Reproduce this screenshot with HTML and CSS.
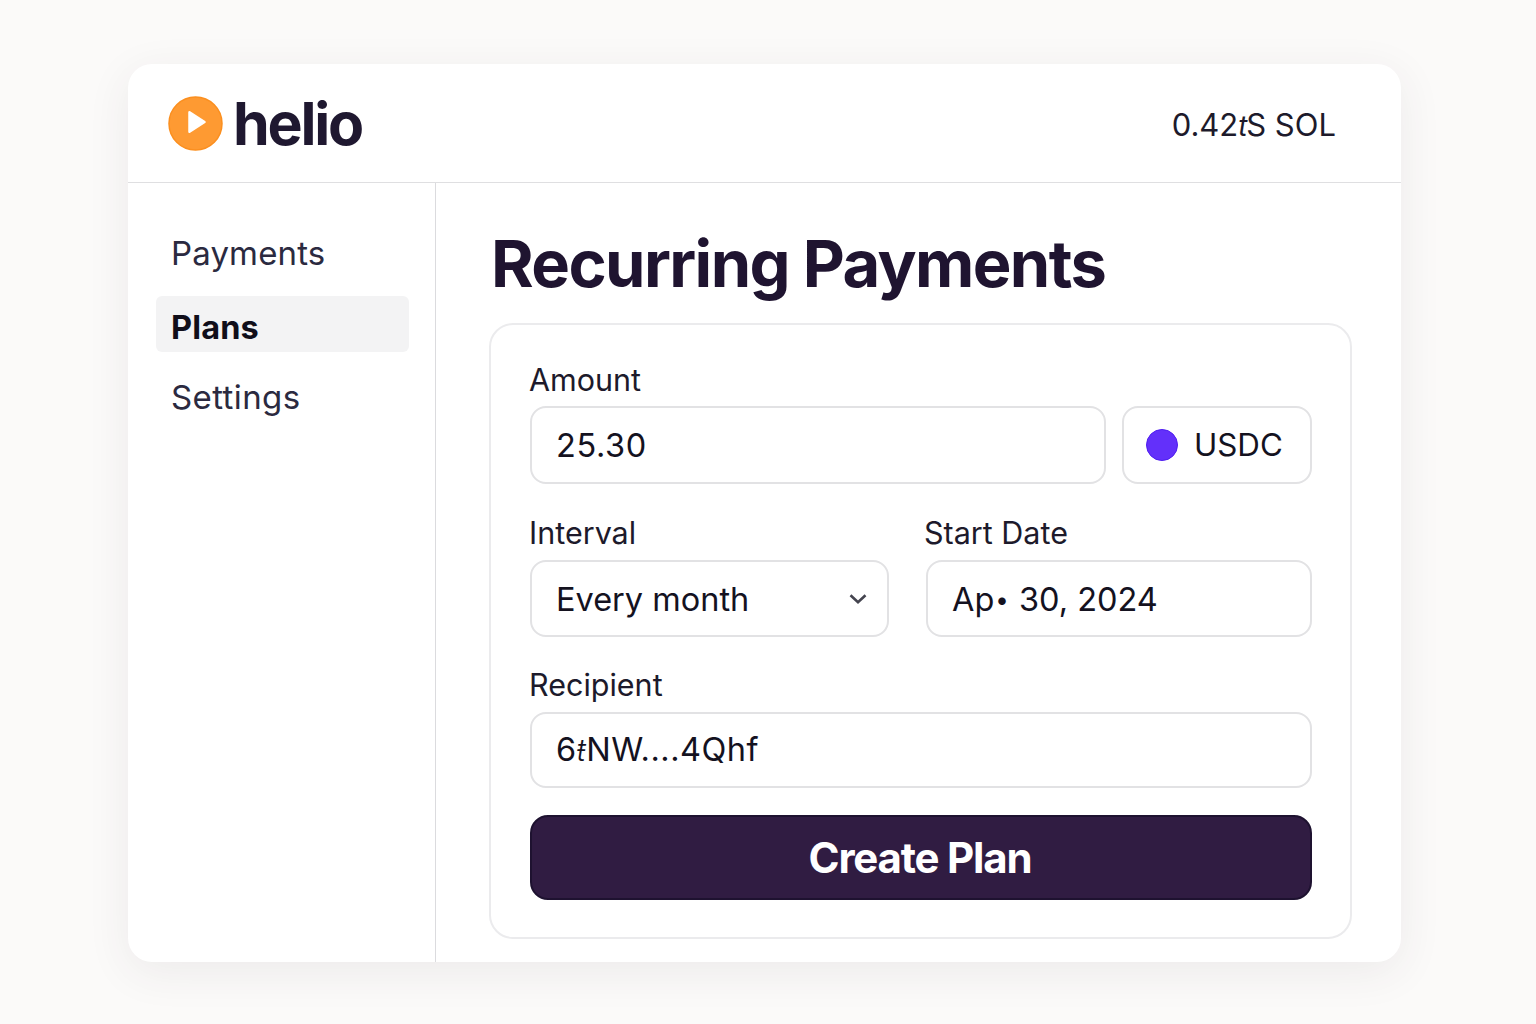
FILE: index.html
```html
<!DOCTYPE html>
<html>
<head>
    <meta charset="utf-8" />
    <title>Recurring Payments</title>
    <link rel="stylesheet" href="styles.css">
</head>
<body>
<div class="app">
    <div class="top">
        <div class="logo">
            <svg class="logo-icon" width="55" height="56" viewBox="0 0 55 56">
                <circle cx="27.500" cy="28.500" r="26.500" fill="#fe9a32" stroke="#fb8f1f" stroke-width="1.5"/>
                <path d="M21.500 17.300 L36.500 27 L21.500 36.700 Z" fill="#fff" stroke="#fff" stroke-width="2.5" stroke-linejoin="round"/>
            </svg>
            <span class="logo-text">helio</span>
        </div>
        <div class="balance">0.42<i>t</i>S SOL</div>
    </div>
    <div class="wrap">
        <div class="side">
            <div class="nav-item">Payments</div>
            <div class="nav-item active">Plans</div>
            <div class="nav-item wide">Settings</div>
        </div>
        <div class="main">
            <h1>Recurring Payments</h1>
            <div class="form">
                <div class="field">
                    <div class="label">Amount</div>
                    <div class="row-amount">
                        <div class="input amount">25.30</div>
                        <div class="input token"><span class="dot"></span><span class="token-name">USDC</span></div>
                    </div>
                </div>
                <div class="row-two">
                    <div class="field">
                        <div class="label">Interval</div>
                        <div class="input select">
                            Every month
                            <svg width="18" height="12" viewBox="0 0 18 12"><path d="M1.500 2.300 L9 9.300 L16.500 2.300" fill="none" stroke="#44444f" stroke-width="2.600"/></svg>
                        </div>
                    </div>
                    <div class="field">
                        <div class="label label-date">Start Date</div>
                        <div class="input"><span>Ap<span class="mark">•</span> 30, 2024</span></div>
                    </div>
                </div>
                <div class="field">
                    <div class="label label-recipient">Recipient</div>
                    <div class="input short"><span>6<i class="odd">ŧ</i>NW....4Qhf</span></div>
                </div>
                <div class="btn">Create Plan</div>
            </div>
        </div>
    </div>
</div>
</body>
</html>
```

FILE: styles.css
```css
*{margin:0;padding:0;box-sizing:border-box;}
body{
    width:1536px;
    height:1024px;
    overflow:hidden;
    padding:64px 135px 0 128px;
    background:#fbfaf9;
    font-family:Inter,"Liberation Sans",sans-serif;
    color:#14121f;
}
.app{
    width:1273px;
    height:898px;
    display:flex;
    flex-direction:column;
    background:#fff;
    border-radius:24px;
    box-shadow:0 10px 44px rgba(60,50,60,.08);
    overflow:hidden;
}
.top{
    height:119px;
    flex:none;
    display:flex;
    align-items:center;
    justify-content:space-between;
    padding:2px 65px 0 40px;
    border-bottom:1px solid #dfdfe1;
}
.logo{display:flex;align-items:center;gap:10px;margin-top:-1px;}
.logo-icon{margin-top:-1px;}
.logo-text{
    font-size:59px;
    font-weight:700;
    letter-spacing:-2.200px;
    line-height:1;
    color:#1f1830;
}
.balance{font-size:31px;font-weight:400;color:#1d1a2b;}
.balance i{letter-spacing:-1.200px;font-size:28px;}
.wrap{flex:1;display:flex;min-height:0;}
.side{
    width:308px;
    flex:none;
    padding:42px 26px 0 28px;
    border-right:1px solid #dbdbde;
}
.nav-item{
    height:56px;
    line-height:56px;
    padding-left:15px;
    margin-bottom:15px;
    font-size:33px;
    letter-spacing:.15px;
    color:#2b2a40;
    border-radius:6px;
}
.nav-item.wide{letter-spacing:.4px;}
.nav-item.active{
    background:#f3f3f4;
    font-weight:700;
    font-size:32.500px;
    line-height:64px;
    color:#100e1a;
    margin-bottom:17px;
}
.main{flex:1;padding:41px 49px 0 53px;}
h1{
    font-size:65px;
    font-weight:700;
    letter-spacing:-1.600px;
    line-height:80px;
    color:#1f1430;
    margin:0 0 19px 2px;
}
.form{
    height:616px;
    padding:39px 38px 0 39px;
    border:2px solid #ebebed;
    border-radius:24px;
}
.field{margin-bottom:33px;}
.label{font-size:30.500px;line-height:32px;margin:0 0 10px -1px;color:#1d1a2b;}
.input{
    height:78px;
    display:flex;
    align-items:center;
    padding:0 24px;
    font-size:32.500px;
    background:#fff;
    border:2px solid #e2e2e4;
    border-radius:16px;
    color:#14121f;
}
.row-amount{display:flex;gap:16px;}
.amount{flex:1;letter-spacing:.6px;}
.token{width:190px;flex:none;gap:16px;padding:0 22px;}
.token-name{font-size:31.300px;}
.dot{width:32px;height:32px;border-radius:50%;background:#6330fa;border:1.500px solid #4f1df0;}
.row-two{display:grid;grid-template-columns:359px 386px;column-gap:37px;}
.row-two .field{margin-bottom:32px;}
.row-two .label{margin-bottom:11px;}
.row-two .input{height:77px;padding-top:1px;}
.row-two .label-date{margin-left:-2px;}
.mark{font-size:24px;margin:0 1px;vertical-align:3px;}
.select{justify-content:space-between;padding-right:20px;}
.label-recipient{margin-bottom:11px;}
.short{height:76px;letter-spacing:.5px;padding-bottom:2px;}
.odd{font-size:30px;font-weight:300;}
.btn{
    height:85px;
    margin-top:-6px;
    padding-right:2px;
    background:#301c42;
    border:2px solid #1e1230;
    border-radius:18px;
    color:#fff;
    font-size:42px;
    font-weight:700;
    letter-spacing:-1.200px;
    text-align:center;
    line-height:81px;
}
```
